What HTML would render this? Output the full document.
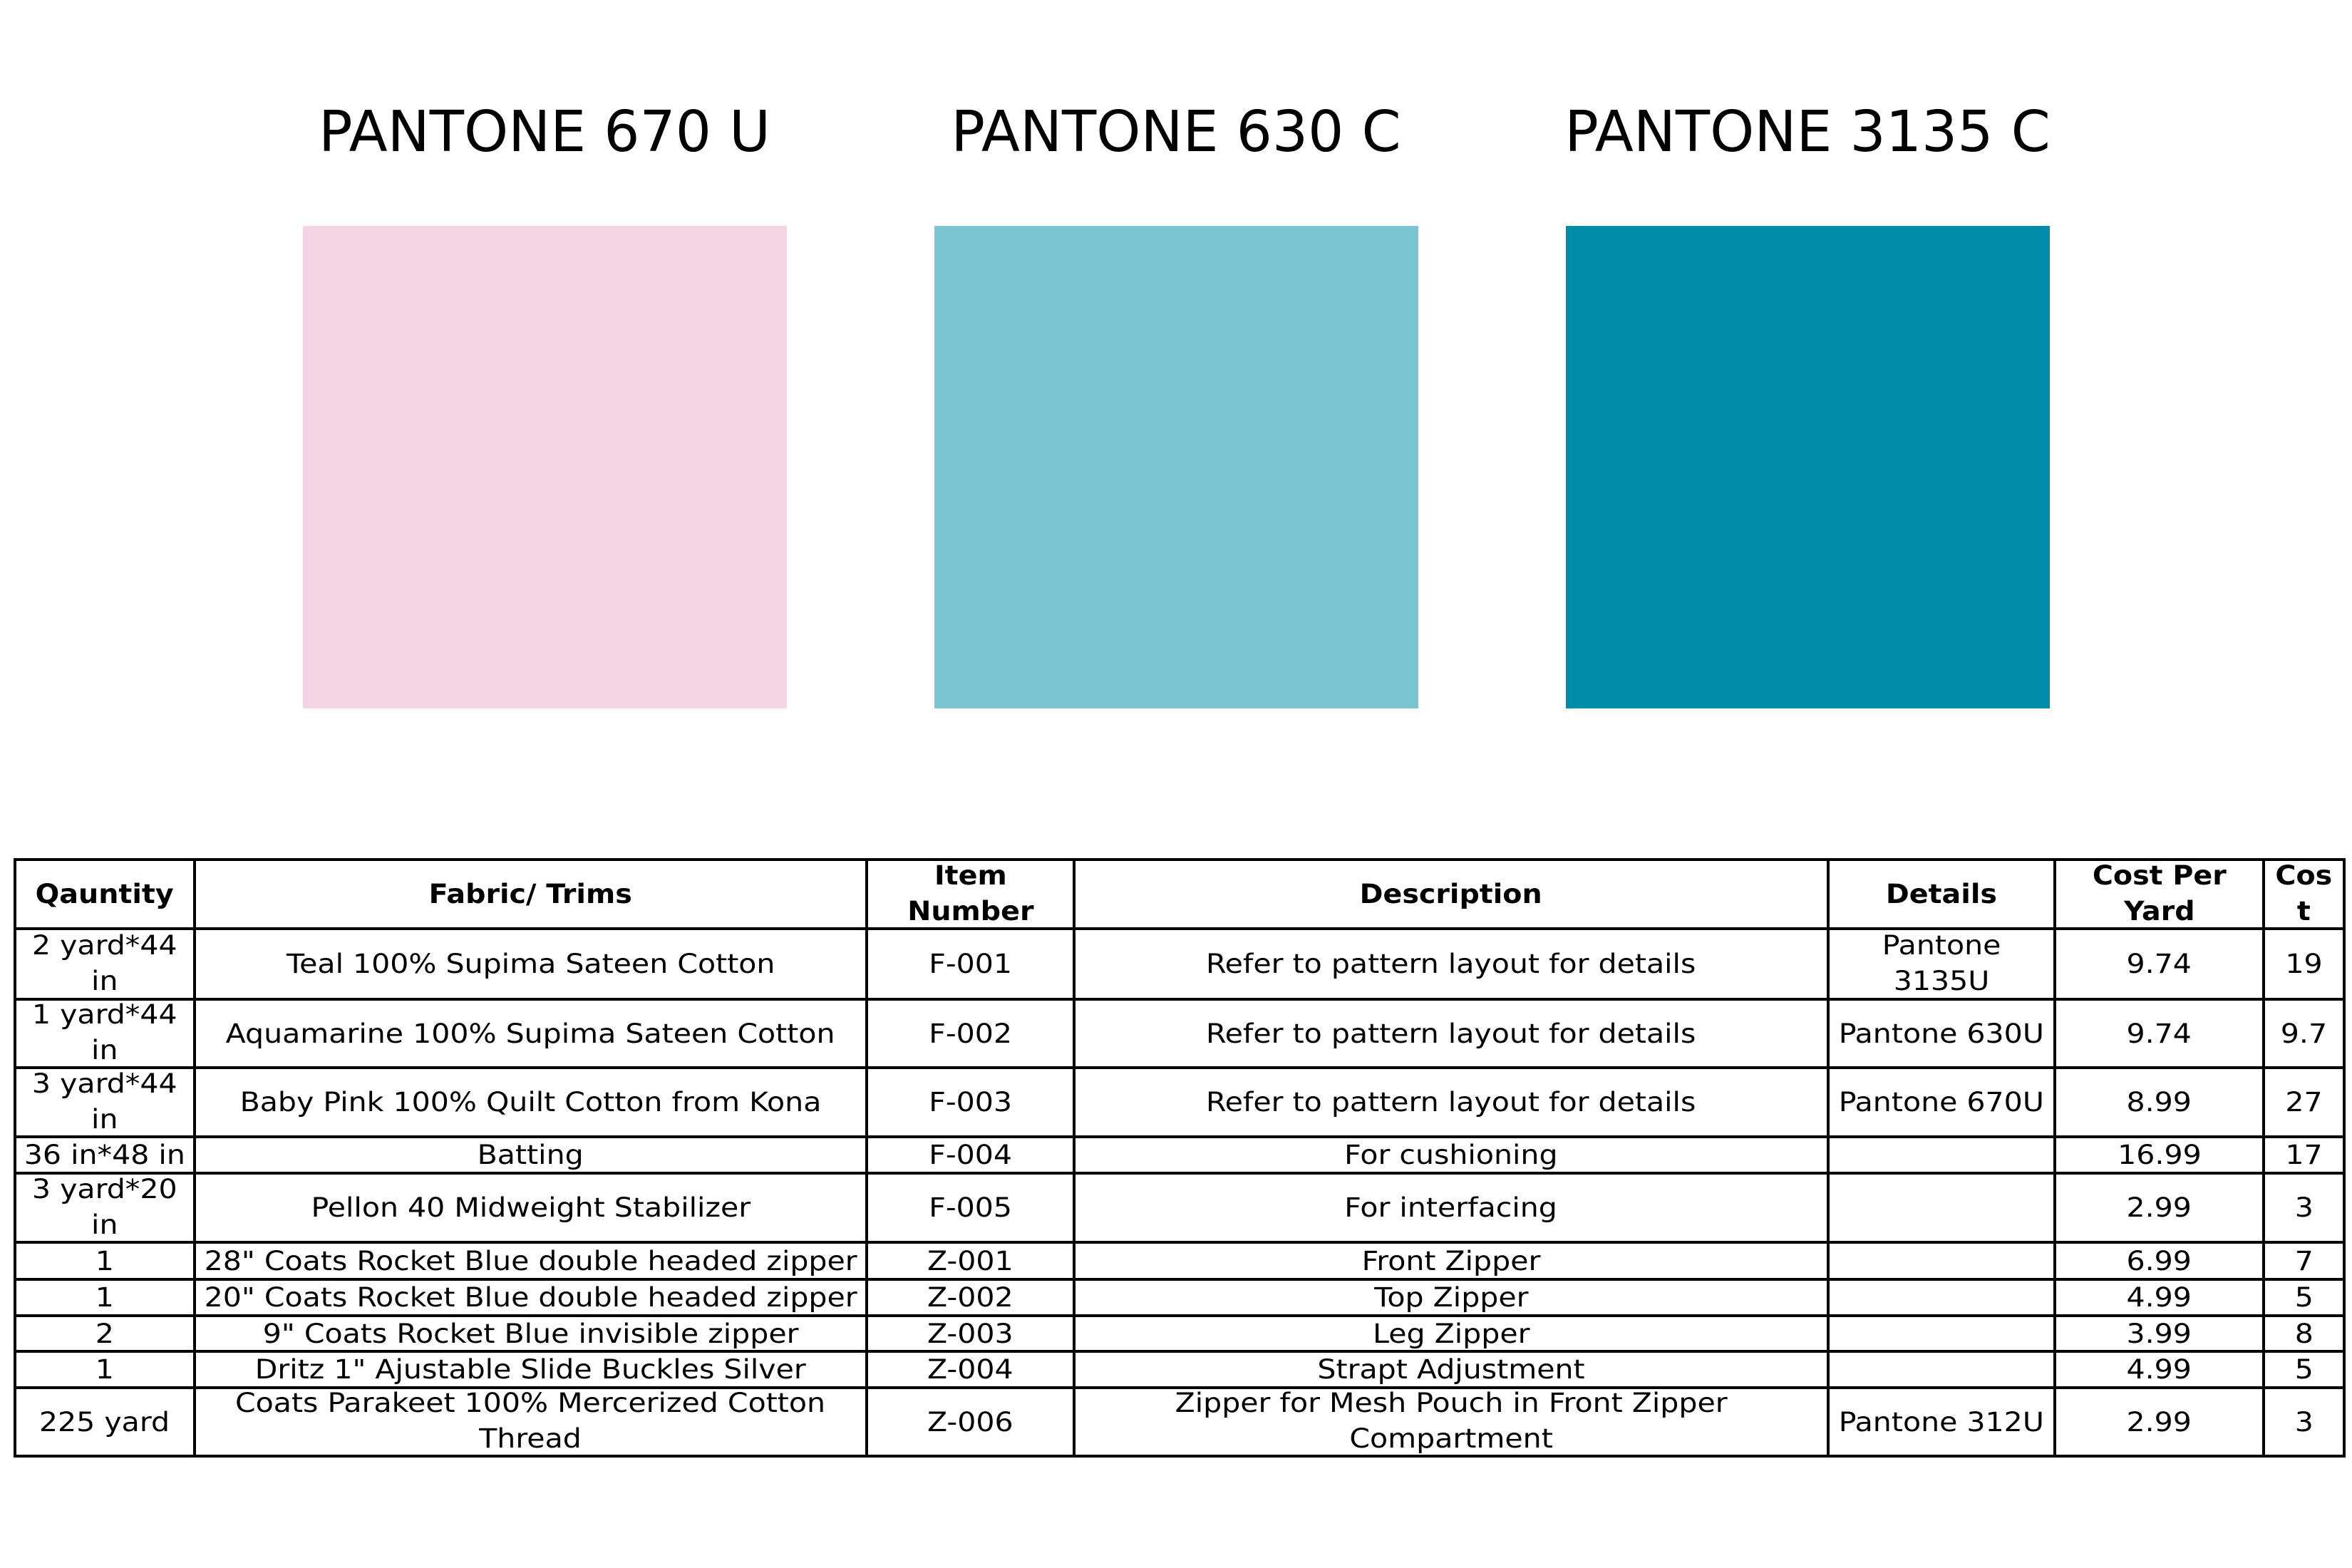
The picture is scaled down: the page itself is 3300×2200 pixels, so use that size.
<!DOCTYPE html>
<html><head><meta charset="utf-8"><style>
body{margin:0;width:3300px;height:2200px;background:#fff;position:relative;overflow:hidden;font-family:"DejaVu Sans","Liberation Sans",sans-serif;color:#000}
.t{position:absolute;top:140px;font-size:79px;line-height:90px;text-align:center;width:800px}
.s{position:absolute;top:317px;width:679px;height:677px}
table{position:absolute;left:19px;top:1204px;width:3268px;border-collapse:collapse;table-layout:fixed}
td{border:4px solid #000;text-align:center;vertical-align:middle;padding:0;font-size:37px;line-height:45px;overflow:hidden;white-space:nowrap}
td span{display:inline-block;transform:scaleX(1.11);transform-origin:center}
th{border:4px solid #000;font-size:37px;line-height:45px;padding:0;font-weight:bold;overflow:hidden;white-space:nowrap}
th span{display:inline-block;transform:scaleX(1.07);transform-origin:center}
span.m{line-height:50px;margin:-5px 0}
</style></head><body>
<div class="t" style="left:364px">PANTONE 670 U</div>
<div class="t" style="left:1250px">PANTONE 630 C</div>
<div class="t" style="left:2136px">PANTONE 3135 C</div>
<div class="s" style="left:425px;background:#F2D4E5"></div>
<div class="s" style="left:1311px;background:#7AC4D4"></div>
<div class="s" style="left:2197px;background:#028DAA"></div>
<table>
<colgroup><col style="width:252px"><col style="width:943px"><col style="width:291px"><col style="width:1058px"><col style="width:318px"><col style="width:293px"><col style="width:113px"></colgroup>
<tr style="height:97px"><th><span>Qauntity</span></th><th><span>Fabric/ Trims</span></th><th><span class="m">Item<br>Number</span></th><th><span>Description</span></th><th><span>Details</span></th><th><span class="m">Cost Per<br>Yard</span></th><th><span class="m">Cos<br>t</span></th></tr>
<tr style="height:99px"><td><span class="m">2 yard*44<br>in</span></td><td><span>Teal 100% Supima Sateen Cotton</span></td><td><span>F-001</span></td><td><span>Refer to pattern layout for details</span></td><td><span class="m">Pantone<br>3135U</span></td><td><span>9.74</span></td><td><span>19</span></td></tr>
<tr style="height:96px"><td><span class="m">1 yard*44<br>in</span></td><td><span>Aquamarine 100% Supima Sateen Cotton</span></td><td><span>F-002</span></td><td><span>Refer to pattern layout for details</span></td><td><span>Pantone 630U</span></td><td><span>9.74</span></td><td><span>9.7</span></td></tr>
<tr style="height:97px"><td><span class="m">3 yard*44<br>in</span></td><td><span>Baby Pink 100% Quilt Cotton from Kona</span></td><td><span>F-003</span></td><td><span>Refer to pattern layout for details</span></td><td><span>Pantone 670U</span></td><td><span>8.99</span></td><td><span>27</span></td></tr>
<tr style="height:51px"><td><span>36 in*48 in</span></td><td><span>Batting</span></td><td><span>F-004</span></td><td><span>For cushioning</span></td><td></td><td><span>16.99</span></td><td><span>17</span></td></tr>
<tr style="height:97px"><td><span class="m">3 yard*20<br>in</span></td><td><span>Pellon 40 Midweight Stabilizer</span></td><td><span>F-005</span></td><td><span>For interfacing</span></td><td></td><td><span>2.99</span></td><td><span>3</span></td></tr>
<tr style="height:52px"><td><span>1</span></td><td><span>28" Coats Rocket Blue double headed zipper</span></td><td><span>Z-001</span></td><td><span>Front Zipper</span></td><td></td><td><span>6.99</span></td><td><span>7</span></td></tr>
<tr style="height:51px"><td><span>1</span></td><td><span>20" Coats Rocket Blue double headed zipper</span></td><td><span>Z-002</span></td><td><span>Top Zipper</span></td><td></td><td><span>4.99</span></td><td><span>5</span></td></tr>
<tr style="height:50px"><td><span>2</span></td><td><span>9" Coats Rocket Blue invisible zipper</span></td><td><span>Z-003</span></td><td><span>Leg Zipper</span></td><td></td><td><span>3.99</span></td><td><span>8</span></td></tr>
<tr style="height:51px"><td><span>1</span></td><td><span>Dritz 1" Ajustable Slide Buckles Silver</span></td><td><span>Z-004</span></td><td><span>Strapt Adjustment</span></td><td></td><td><span>4.99</span></td><td><span>5</span></td></tr>
<tr style="height:96px"><td><span>225 yard</span></td><td><span class="m">Coats Parakeet 100% Mercerized Cotton<br>Thread</span></td><td><span>Z-006</span></td><td><span class="m">Zipper for Mesh Pouch in Front Zipper<br>Compartment</span></td><td><span>Pantone 312U</span></td><td><span>2.99</span></td><td><span>3</span></td></tr>
</table>
</body></html>
